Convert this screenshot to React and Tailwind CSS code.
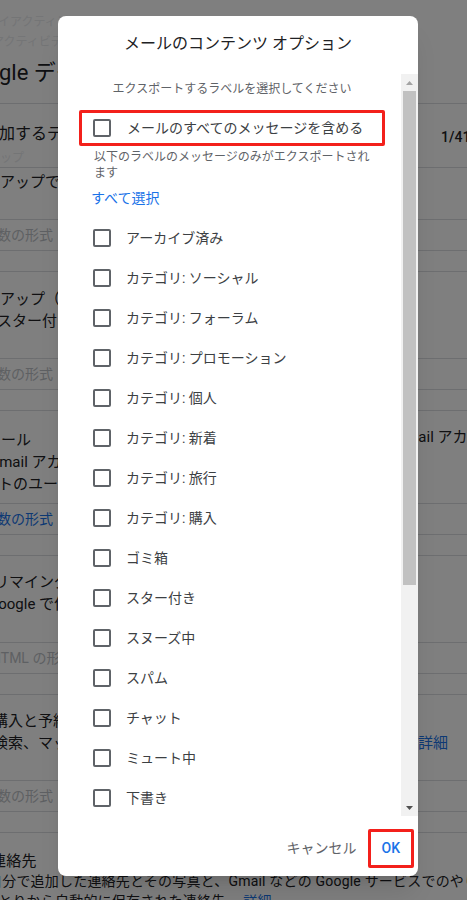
import React from 'react';

const labels = [
  'アーカイブ済み',
  'カテゴリ: ソーシャル',
  'カテゴリ: フォーラム',
  'カテゴリ: プロモーション',
  'カテゴリ: 個人',
  'カテゴリ: 新着',
  'カテゴリ: 旅行',
  'カテゴリ: 購入',
  'ゴミ箱',
  'スター付き',
  'スヌーズ中',
  'スパム',
  'チャット',
  'ミュート中',
  '下書き',
  '受信トレイ',
  '送信済み',
  '重要',
];

const Box = () => (
  <span className="block w-[18px] h-[18px] shrink-0 border-2 border-[#5f6368] rounded-[2px]" />
);

// dimmed page behind the dialog
const Background = () => (
  <div className="h-[900px] overflow-hidden bg-white text-[#202124] whitespace-nowrap">
    <div className="h-[104px] border-b border-[#dadce0]">
      <div className="pt-[12px] text-[12px] leading-[20px] text-[#e8eaed]">
        <p className="-ml-[14px]">マイアクティビティ</p>
        <p className="-ml-[8px]">アクティビティ</p>
      </div>
      <p className="mt-[6px] -ml-[1px] text-[22px] leading-[30px]">gle データ エクスポート</p>
    </div>
    <div className="h-[64px] border-b border-[#dadce0] flex justify-between">
      <div className="pt-[19px]">
        <p className="-ml-[17px] text-[16px] leading-[22px]">追加するデータを選択</p>
        <p className="mt-[5px] text-[12px] leading-[16px] text-[#e8eaed]">ップ</p>
      </div>
      <p className="w-[26px] pt-[22px] text-[14px] font-medium leading-[22px]">1/41</p>
    </div>

    <div className="border-b border-[#dadce0]">
      <div className="h-[51px] pt-[3px] text-[15px] leading-[22px]">
        <p>アップでの</p>
      </div>
      <div className="h-[32px] border-y border-[#dadce0] flex items-center text-[14px] text-[#bdc1c6] -ml-[3px]">数の形式</div>
      <div className="h-[20px]" />
    </div>

    <div className="border-b border-[#dadce0]">
      <div className="h-[86px] pt-[16px] text-[15px] leading-[22px]">
        <p>アップ（マ</p>
        <p className="-ml-[3px]">スター付き</p>
      </div>
      <div className="h-[32px] border-y border-[#dadce0] flex items-center text-[14px] text-[#bdc1c6] -ml-[3px]">数の形式</div>
      <div className="h-[20px]" />
    </div>

    <div className="border-b border-[#dadce0]">
      <div className="h-[92px] pt-[18px] flex justify-between text-[15px] leading-[22px]">
        <div>
          <p className="-ml-[14px]">メール</p>
          <p className="-ml-[11px]">Gmail アカ</p>
          <p className="-ml-[2px]">トのユー</p>
        </div>
        <div className="w-[50px] overflow-hidden">
          <p className="-ml-[22px] -mt-[3px]">Gmail アカウント</p>
        </div>
      </div>
      <div className="h-[32px] border-y border-[#dadce0] flex items-center text-[14px] text-[#1a73e8] -ml-[3px]">数の形式</div>
      <div className="h-[20px]" />
    </div>

    <div className="border-b border-[#dadce0]">
      <div className="h-[86px] pt-[15px] text-[15px] leading-[22px]">
        <p className="-ml-[6px]">リマインダー</p>
        <p className="-ml-[12px]">Google で作</p>
      </div>
      <div className="h-[32px] border-y border-[#dadce0] flex items-center text-[14px] text-[#bdc1c6] -ml-[9px]">HTML の形式</div>
      <div className="h-[20px]" />
    </div>

    <div className="border-b border-[#dadce0]">
      <div className="h-[85px] pt-[15px] flex justify-between text-[15px] leading-[22px]">
        <div>
          <p className="-ml-[7px]">購入と予約</p>
          <p className="-ml-[7px]">検索、マッ</p>
        </div>
        <div className="w-[49px] pt-[22px] text-[#1a73e8]">
          <p>詳細</p>
        </div>
      </div>
      <div className="h-[32px] border-y border-[#dadce0] flex items-center text-[14px] text-[#bdc1c6] -ml-[3px]">数の形式</div>
      <div className="h-[20px]" />
    </div>

    <div className="pt-[18px] text-[14px] leading-[20px] tracking-[0.2px]">
      <p className="-ml-[9px] text-[15px]">連絡先</p>
      <p className="-ml-[12px]">自分で追加した連絡先とその写真と、Gmail などの Google サービスでのやりとり</p>
      <p className="-ml-[16px]">りとりから自動的に保存された連絡先。 <span className="text-[#1a73e8]">詳細</span></p>
    </div>
  </div>
);

const Scrollbar = () => (
  <div className="w-[17px] shrink-0 bg-[#f1f1f1] flex flex-col">
    <div className="h-[17px] flex items-center justify-center">
      <svg width="7" height="4" viewBox="0 0 7 4"><path d="M3.5 0L7 4H0z" fill="#a3a3a3" /></svg>
    </div>
    <div className="mx-[2px] h-[494px] bg-[#c1c1c1]" />
    <div className="flex-1" />
    <div className="h-[17px] flex items-center justify-center">
      <svg width="7" height="4" viewBox="0 0 7 4"><path d="M0 0H7L3.5 4z" fill="#505050" /></svg>
    </div>
  </div>
);

export default function App() {
  return (
    <div className="relative h-[900px] overflow-hidden font-[Roboto,'Noto_Sans_CJK_JP',sans-serif]">
      <Background />
      <div className="absolute inset-0 bg-black/50 pl-[58px] pt-[16px]">
        <div className="w-[360px] h-[860px] bg-white rounded-lg shadow-xl flex flex-col overflow-hidden">
          <div className="h-[58px] shrink-0 pt-[17px] text-center text-[16px] leading-[22px] text-[#202124]">
            メールのコンテンツ オプション
          </div>

          <div className="h-[742px] shrink-0 flex">
            <div className="flex-1 overflow-hidden pl-[21px] pr-[16px] pt-[7px]">
              <p className="text-center text-[12px] leading-[16px] text-[#5f6368]">エクスポートするラベルを選択してください</p>

              <div className="mt-[13px] h-[36px] border-[3px] border-[#f3201b] rounded-[2px] flex items-center pl-[11px] gap-[16px]">
                <Box />
                <span className="text-[14px] text-[#3c4043]">メールのすべてのメッセージを含める</span>
              </div>

              <p className="mt-[3px] pl-[15px] pr-[12px] text-[12px] leading-[16px] text-[#5f6368]">
                以下のラベルのメッセージのみがエクスポートされます
              </p>

              <button className="block mt-[7px] pl-[12px] text-[14px] leading-[20px] text-[#1a73e8]">すべて選択</button>

              <ul className="mt-[10px]">
                {labels.map((label) => (
                  <li key={label} className="h-[40px] flex items-center pl-[14px] gap-[15px]">
                    <Box />
                    <span className="text-[14px] text-[#3c4043]">{label}</span>
                  </li>
                ))}
              </ul>
            </div>
            <Scrollbar />
          </div>

          <div className="flex-1 flex items-center justify-end pt-[4px] pr-[4px]">
            <button className="pr-[11px] text-[14px] text-[#5f6368]">キャンセル</button>
            <div className="h-[39px] px-[11px] border-[3px] border-[#f3201b] rounded-[2px] flex items-center">
              <button className="text-[14px] font-medium text-[#1a73e8]">OK</button>
            </div>
          </div>
        </div>
      </div>
    </div>
  );
}
